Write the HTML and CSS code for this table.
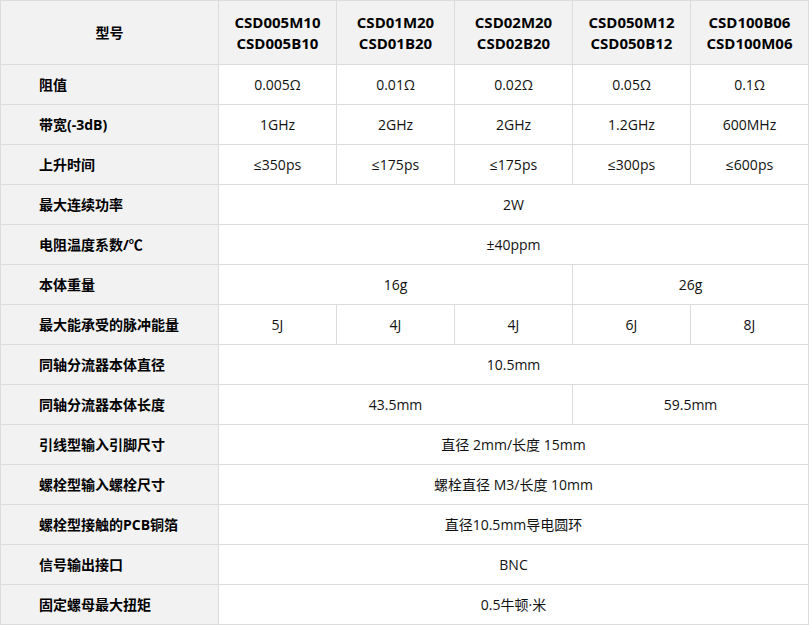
FILE: index.html
```html
<!DOCTYPE html>
<html lang="zh-CN">
<head>
<meta charset="utf-8">
<link rel="stylesheet" href="styles.css">
</head>
<body>
<div class="wrap">
<table class="spec">
  <colgroup>
    <col class="c-label">
    <col class="c-val"><col class="c-val"><col class="c-val"><col class="c-val"><col class="c-val">
  </colgroup>
  <thead>
    <tr>
      <th class="head-label">型号</th>
      <th>CSD005M10<br>CSD005B10</th>
      <th>CSD01M20<br>CSD01B20</th>
      <th>CSD02M20<br>CSD02B20</th>
      <th>CSD050M12<br>CSD050B12</th>
      <th>CSD100B06<br>CSD100M06</th>
    </tr>
  </thead>
  <tbody>
    <tr><td class="label">阻值</td><td>0.005Ω</td><td>0.01Ω</td><td>0.02Ω</td><td>0.05Ω</td><td>0.1Ω</td></tr>
    <tr><td class="label">带宽(-3dB)</td><td>1GHz</td><td>2GHz</td><td>2GHz</td><td>1.2GHz</td><td>600MHz</td></tr>
    <tr><td class="label">上升时间</td><td>≤350ps</td><td>≤175ps</td><td>≤175ps</td><td>≤300ps</td><td>≤600ps</td></tr>
    <tr><td class="label">最大连续功率</td><td colspan="5">2W</td></tr>
    <tr><td class="label">电阻温度系数/℃</td><td colspan="5">±40ppm</td></tr>
    <tr><td class="label">本体重量</td><td colspan="3">16g</td><td colspan="2">26g</td></tr>
    <tr><td class="label">最大能承受的脉冲能量</td><td>5J</td><td>4J</td><td>4J</td><td>6J</td><td>8J</td></tr>
    <tr><td class="label">同轴分流器本体直径</td><td colspan="5">10.5mm</td></tr>
    <tr><td class="label">同轴分流器本体长度</td><td colspan="3">43.5mm</td><td colspan="2">59.5mm</td></tr>
    <tr><td class="label">引线型输入引脚尺寸</td><td colspan="5">直径 2mm/长度 15mm</td></tr>
    <tr><td class="label">螺栓型输入螺栓尺寸</td><td colspan="5">螺栓直径 M3/长度 10mm</td></tr>
    <tr><td class="label">螺栓型接触的PCB铜箔</td><td colspan="5">直径10.5mm导电圆环</td></tr>
    <tr><td class="label">信号输出接口</td><td colspan="5">BNC</td></tr>
    <tr><td class="label">固定螺母最大扭矩</td><td colspan="5">0.5牛顿·米</td></tr>
  </tbody>
</table>
</div>
</body>
</html>
```
FILE: styles.css
```css
html, body {
  margin: 0;
  padding: 0;
  background: #ffffff;
}
body {
  font-family: "Open Sans", "Noto Sans CJK SC", sans-serif;
  font-size: 14px;
  color: #111111;
}
.wrap {
  width: 809px;
  height: 625px;
  box-sizing: border-box;
  border-right: 1px solid #dcdcdc;
  border-bottom: 1px solid #dcdcdc;
}
.spec {
  width: 808px;
  border-collapse: collapse;
  table-layout: fixed;
}
.c-label { width: 218px; }
.c-val { width: 118px; }
.spec th, .spec td {
  border: 1px solid #dcdcdc;
  padding: 0;
  text-align: center;
  vertical-align: middle;
}
.spec thead th {
  background: #f2f2f2;
  font-weight: 700;
  font-size: 15px;
  color: #000;
  height: 63px;
  line-height: 21px;
}
.spec thead th.head-label {
  font-size: 14px;
}
.spec tbody td {
  height: 39px;
  line-height: 20px;
}
.spec td.label {
  background: #f2f2f2;
  text-align: left;
  padding-left: 38px;
  font-weight: 700;
  color: #000;
}
```
